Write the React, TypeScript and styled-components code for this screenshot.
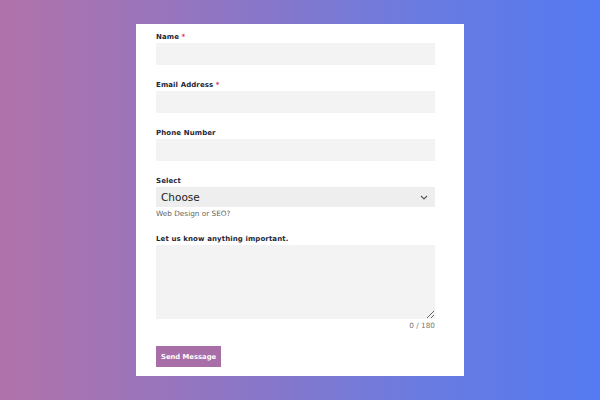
import React, { useState } from 'react'
import styled, { createGlobalStyle } from 'styled-components'

const Global = createGlobalStyle`
  html, body {
    margin: 0;
    padding: 0;
    height: 100%;
  }
  body {
    font-family: 'DejaVu Sans', 'Noto Sans', sans-serif;
  }
  #root {
    min-height: 100%;
  }
`

const Page = styled.div`
  width: 600px;
  height: 400px;
  display: flex;
  justify-content: center;
  padding-top: 24px;
  box-sizing: border-box;
  background: linear-gradient(90deg, #b172a9 0%, #8c76c6 40%, #6a7be0 70%, #547af1 100%);
`

const Card = styled.form`
  width: 328px;
  height: 352px;
  box-sizing: border-box;
  background: #fff;
  padding: 7px 29px 8px 20px;
  display: flex;
  flex-direction: column;
`

const Field = styled.div<{ $gap?: number }>`
  display: flex;
  flex-direction: column;
  margin-bottom: ${(p) => (p.$gap ?? 14)}px;
`

const Label = styled.label`
  font-size: 7px;
  font-weight: 700;
  line-height: 12px;
  color: #1e2738;
  letter-spacing: 0.1px;
`

const Star = styled.span`
  color: #e0315c;
`

const Input = styled.input`
  height: 22px;
  box-sizing: border-box;
  border: 0;
  background: #f3f3f3;
  outline: none;
  padding: 0 6px;
  font-family: inherit;
`

const SelectWrap = styled.div`
  position: relative;
  height: 20px;
  background: #eeeeee;
  display: flex;
  align-items: center;
  padding: 0 7px 0 5px;
  justify-content: space-between;
`

const SelectText = styled.span`
  font-size: 10.5px;
  color: #222;
`

const Help = styled.div`
  font-size: 7.3px;
  color: #666;
  line-height: 12px;
  margin-top: 1px;
`

const TextArea = styled.textarea`
  height: 74px;
  box-sizing: border-box;
  border: 0;
  background: #f3f3f3;
  outline: none;
  resize: vertical;
  padding: 6px;
  font-family: inherit;
  display: block;
`

const Counter = styled.div`
  text-align: right;
  font-size: 7.3px;
  color: #777;
  line-height: 12px;
  margin-top: 1px;
`

const SendButton = styled.button`
  align-self: flex-start;
  margin-top: 14px;
  height: 21px;
  padding: 0 5px;
  border: 0;
  background: #a86ea8;
  color: #fff;
  font-family: inherit;
  font-size: 6.8px;
  font-weight: 700;
  cursor: pointer;
`

const Chevron = () => (
  <svg width="8" height="5" viewBox="0 0 8 5">
    <path d="M1 1l3 3 3-3" fill="none" stroke="#555" strokeWidth="1.1" />
  </svg>
)

export default function App() {
  const [msg, setMsg] = useState('')
  return (
    <>
      <Global />
      <Page>
        <Card onSubmit={(e) => e.preventDefault()}>
          <Field>
            <Label>
              Name <Star>*</Star>
            </Label>
            <Input />
          </Field>
          <Field>
            <Label>
              Email Address <Star>*</Star>
            </Label>
            <Input />
          </Field>
          <Field>
            <Label>Phone Number</Label>
            <Input />
          </Field>
          <Field $gap={13}>
            <Label>Select</Label>
            <SelectWrap>
              <SelectText>Choose</SelectText>
              <Chevron />
            </SelectWrap>
            <Help>Web Design or SEO?</Help>
          </Field>
          <Field $gap={0}>
            <Label>Let us know anything important.</Label>
            <TextArea value={msg} maxLength={180} onChange={(e) => setMsg(e.target.value)} />
            <Counter>{msg.length} / 180</Counter>
          </Field>
          <SendButton type="submit">Send Message</SendButton>
        </Card>
      </Page>
    </>
  )
}
